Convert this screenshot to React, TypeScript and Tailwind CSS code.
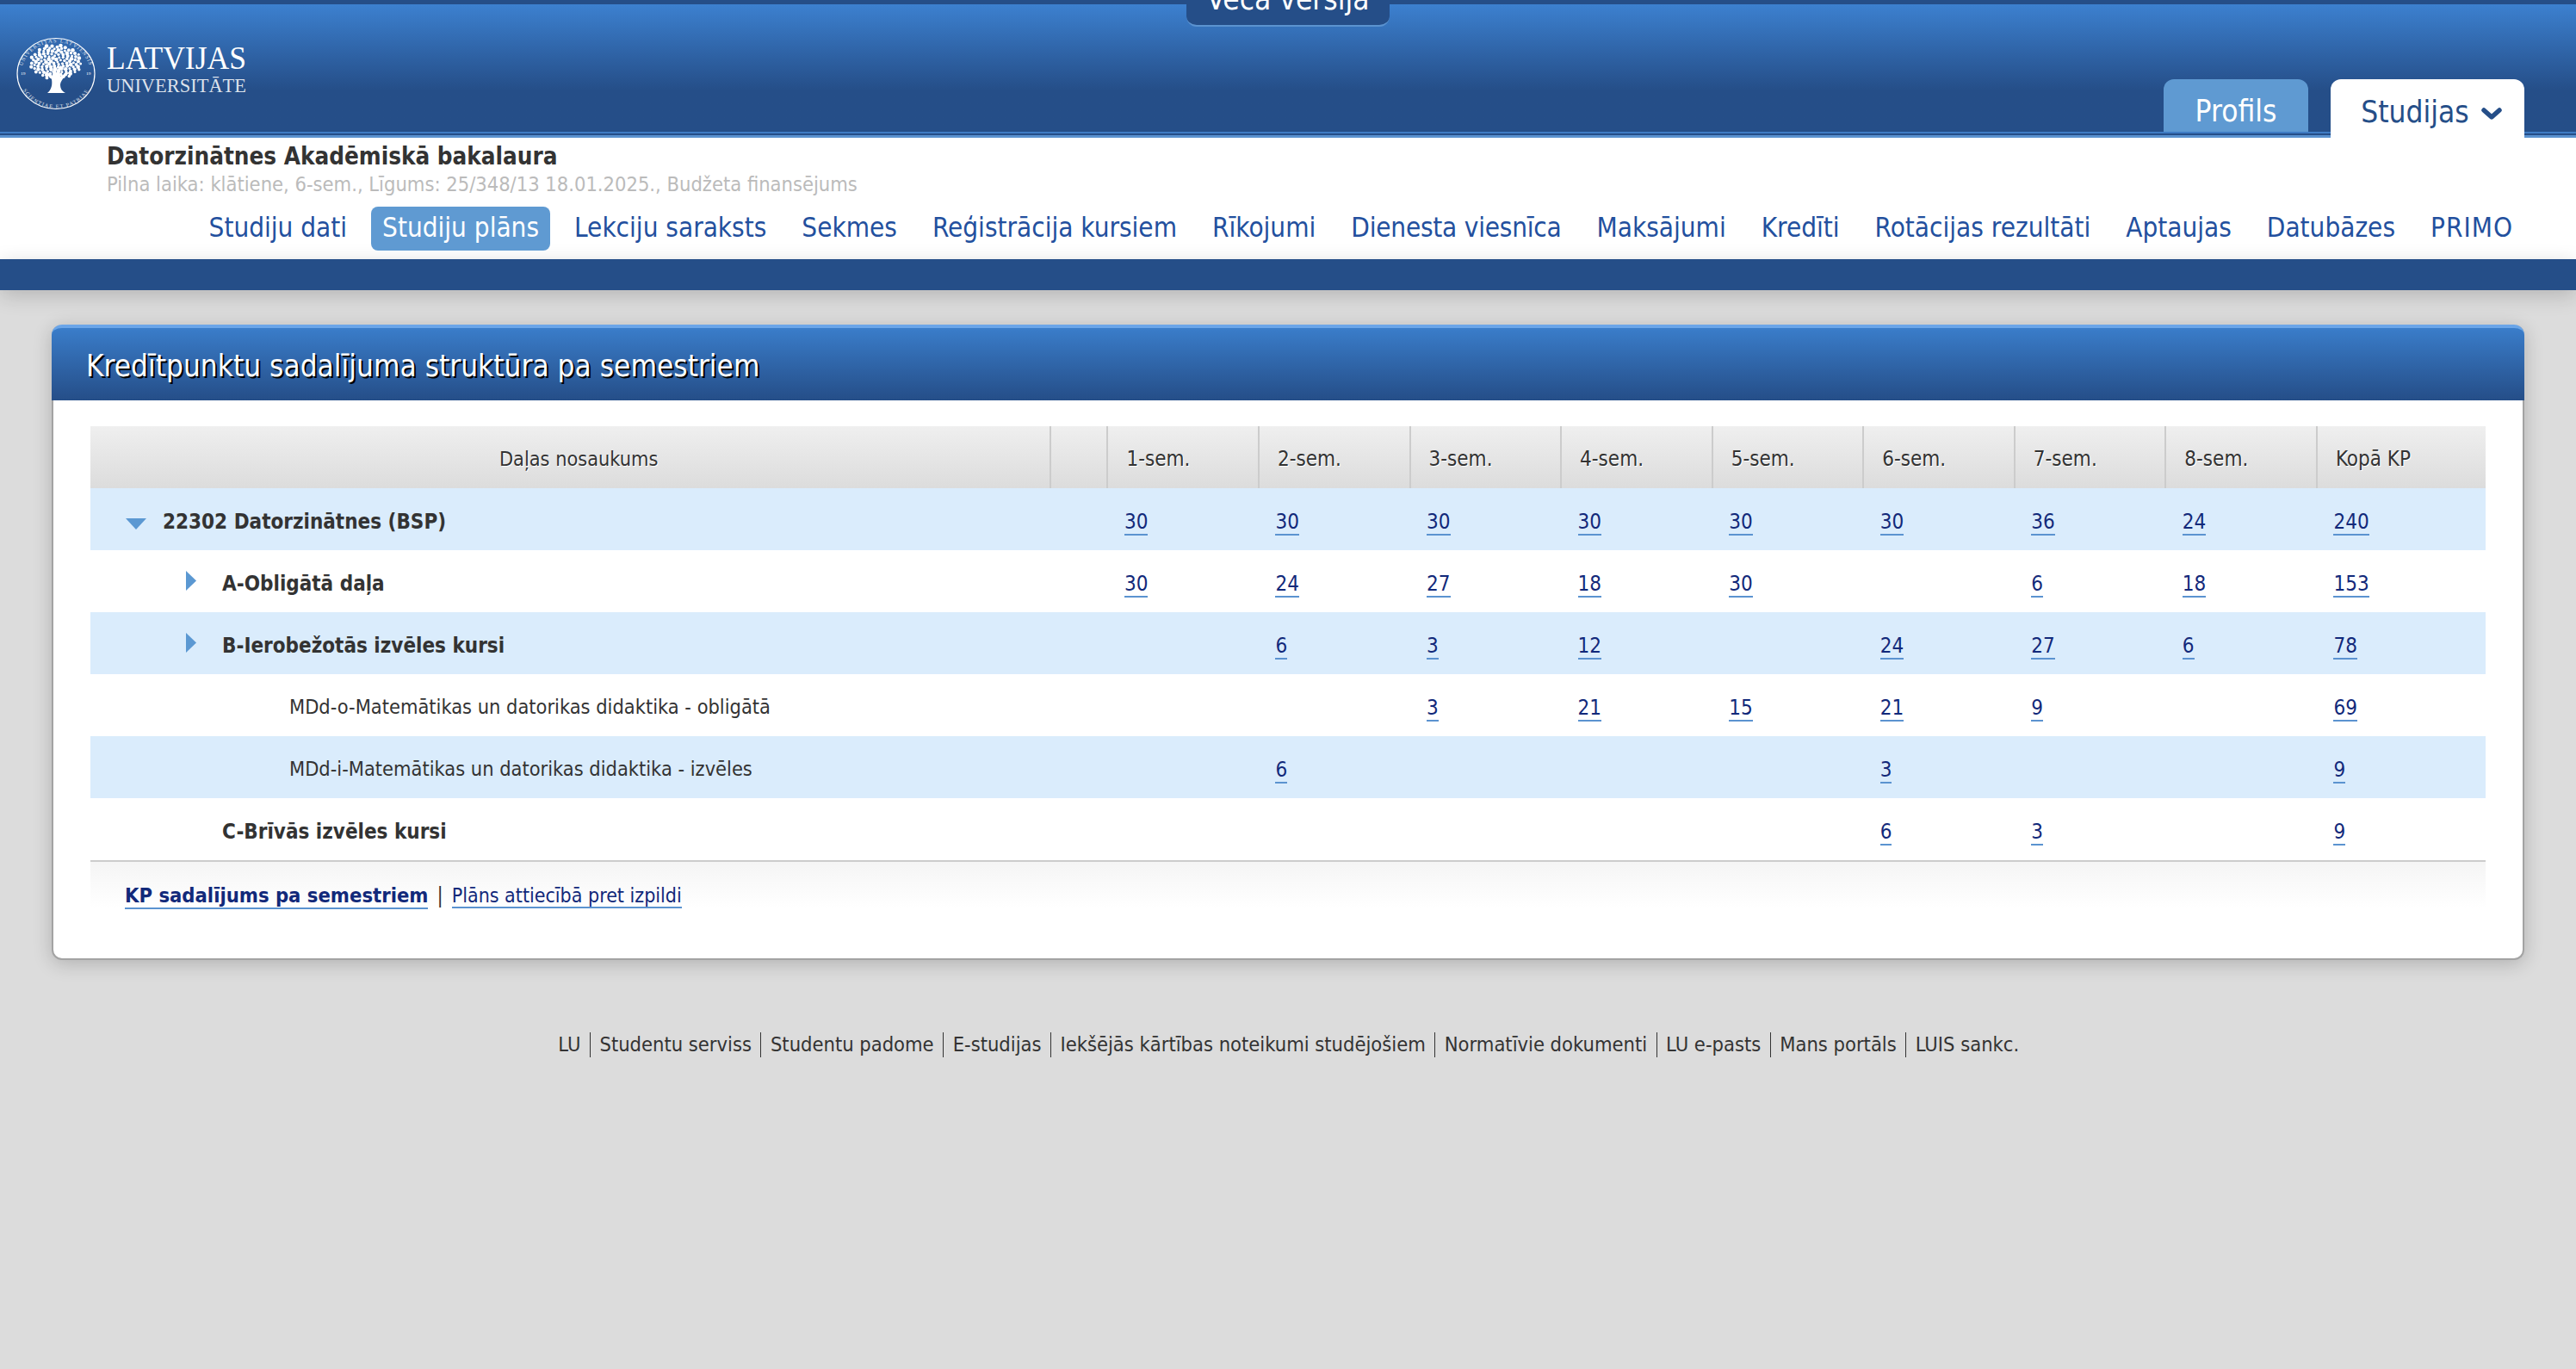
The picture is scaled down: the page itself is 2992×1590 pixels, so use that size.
import React from "react";

const font = "font-['Tahoma','DejaVu_Sans_Condensed','DejaVu_Sans',sans-serif]";

const navItems = [
  { label: "Studiju dati", tweak: "" },
  { label: "Studiju plāns", tweak: "" },
  { label: "Lekciju saraksts", tweak: "" },
  { label: "Sekmes", tweak: "" },
  { label: "Reģistrācija kursiem", tweak: "" },
  { label: "Rīkojumi", tweak: "" },
  { label: "Dienesta viesnīca", tweak: "tracking-[-0.22px]" },
  { label: "Maksājumi", tweak: "" },
  { label: "Kredīti", tweak: "" },
  { label: "Rotācijas rezultāti", tweak: "" },
  { label: "Aptaujas", tweak: "" },
  { label: "Datubāzes", tweak: "" },
  { label: "PRIMO", tweak: "tracking-[1px]" },
];

const footerLinks = [
  "LU",
  "Studentu serviss",
  "Studentu padome",
  "E-studijas",
  "Iekšējās kārtības noteikumi studējošiem",
  "Normatīvie dokumenti",
  "LU e-pasts",
  "Mans portāls",
  "LUIS sankc.",
];

const columns = ["1-sem.", "2-sem.", "3-sem.", "4-sem.", "5-sem.", "6-sem.", "7-sem.", "8-sem.", "Kopā KP"];

type Row = {
  name: string;
  bold: boolean;
  indent: string;
  arrow?: "down" | "right";
  values: string[];
};

const rows: Row[] = [
  { name: "22302 Datorzinātnes (BSP)", bold: true, indent: "pl-[84px]", arrow: "down", values: ["30", "30", "30", "30", "30", "30", "36", "24", "240"] },
  { name: "A-Obligātā daļa", bold: true, indent: "pl-[153px]", arrow: "right", values: ["30", "24", "27", "18", "30", "", "6", "18", "153"] },
  { name: "B-Ierobežotās izvēles kursi", bold: true, indent: "pl-[153px]", arrow: "right", values: ["", "6", "3", "12", "", "24", "27", "6", "78"] },
  { name: "MDd-o-Matemātikas un datorikas didaktika - obligātā", bold: false, indent: "pl-[231px]", values: ["", "", "3", "21", "15", "21", "9", "", "69"] },
  { name: "MDd-i-Matemātikas un datorikas didaktika - izvēles", bold: false, indent: "pl-[231px]", values: ["", "6", "", "", "", "3", "", "", "9"] },
  { name: "C-Brīvās izvēles kursi", bold: true, indent: "pl-[153px]", values: ["", "", "", "", "", "6", "3", "", "9"] },
];

// leaves of the tree in the seal, placed once from a fixed sequence
const leaves: { x: number; y: number; r: number }[] = [];
for (let i = 0; i < 120; i++) {
  const a = i * 2.39996;
  const d = Math.sqrt((i + 0.5) / 120);
  leaves.push({
    x: 65 + Math.cos(a) * d * 30,
    y: 72 + Math.sin(a) * d * 20,
    r: 1.5 + ((i * 7) % 5) * 0.2,
  });
}

const Logo = () => (
  <svg width="300" height="140" viewBox="0 0 300 140" className="block -mt-[5px]">
    <defs>
      <path id="sealTop" d="M 25 85 A 40 40 0 0 1 105 85" />
      <path id="sealBottom" d="M 21 85 A 44 44 0 0 0 109 85" />
    </defs>
    <g transform="translate(0 85.5) scale(1 0.91) translate(0 -85)">
      <circle cx="65" cy="85" r="45" fill="none" stroke="#fff" strokeWidth="1.2" />
      <text fill="#fff" fontSize="6.4" letterSpacing="1.2" fontFamily="Liberation Serif, serif" opacity="0.85">
        <textPath href="#sealTop" startOffset="50%" textAnchor="middle">UNIVERSITAS LATVIENSIS</textPath>
      </text>
      <text fill="#fff" fontSize="6.4" letterSpacing="1.2" fontFamily="Liberation Serif, serif" opacity="0.85">
        <textPath href="#sealBottom" startOffset="50%" textAnchor="middle">SCIENTIAE ET PATRIAE</textPath>
      </text>
      <text x="24" y="87" fill="#fff" fontSize="5.5" fontFamily="Liberation Serif, serif">19</text>
      <text x="100" y="87" fill="#fff" fontSize="5.5" fontFamily="Liberation Serif, serif">19</text>
    </g>
    <g fill="#fff">
      {leaves.map((l, i) => (
        <circle key={i} cx={l.x} cy={l.y} r={l.r} />
      ))}
      <path d="M55 108 C60 104 61 98 60 92 C56 88 51 84 47 82 C53 83 58 85 61 88 L62 76 L65 76 L65 86 L70 76 L72 77 L68 90 C74 86 79 84 84 82 C77 87 71 92 70 98 C70 103 72 106 76 108 Z" />
    </g>
    <text x="124" y="80" fill="#fff" fontSize="38" fontFamily="Liberation Serif, serif" textLength="162" lengthAdjust="spacingAndGlyphs">LATVIJAS</text>
    <text x="124" y="107" fill="#fff" fillOpacity="0.85" fontSize="23.5" fontFamily="Liberation Serif, serif" textLength="162" lengthAdjust="spacingAndGlyphs">UNIVERSITĀTE</text>
  </svg>
);

const DownTriangle = () => (
  <svg width="24" height="13" viewBox="0 0 24 13" className="absolute left-[41px] top-[35px]">
    <path d="M0 0H24L12 13Z" fill="#5b98d2" />
  </svg>
);

const RightTriangle = () => (
  <svg width="12" height="23" viewBox="0 0 12 23" className="absolute left-[111px] top-[24px]">
    <path d="M0 0L12 11.5L0 23Z" fill="#5b98d2" />
  </svg>
);

export default function App() {
  return (
    <div className={`min-h-screen bg-[#dcdcdc] text-[#333] overflow-hidden ${font}`}>
      {/* Header */}
      <header className="relative h-[160px] border-t-[5px] border-[#254e88] bg-gradient-to-b from-[#3c80cf] from-[1px] to-[#254e88] to-[100px]">
        <div className="absolute left-1/2 top-[-5px] h-[31px] w-[236px] -translate-x-1/2 overflow-hidden rounded-b-xl border-b-2 border-[#5b93d0] bg-[#254e88] text-center">
          <span className="block -mt-[21px] text-[35px] leading-[40px] text-white">Vecā versija</span>
        </div>
        <div className="flex h-[148px] items-start justify-between">
          <Logo />
          <div className="mr-[60px] mt-[87px] flex items-stretch gap-[26px]">
            <a className="flex h-[61px] w-[168px] items-center justify-center rounded-t-xl bg-[#5f9ad2] pt-[14px] text-[35px] text-white">Profils</a>
            <a className="relative z-10 flex h-[68px] w-[225px] items-start justify-center gap-[14px] rounded-t-xl bg-white pl-[9px] pt-[14px] text-[35px] leading-[48px] text-[#254e88]">
              Studijas
              <svg width="24" height="15" viewBox="0 0 24 15" className="mt-[19px]">
                <path d="M3 3L12 11L21 3" fill="none" stroke="#254e88" strokeWidth="5.5" strokeLinecap="round" strokeLinejoin="round" />
              </svg>
            </a>
          </div>
        </div>
        <div className="absolute inset-x-0 bottom-0 h-[7px] border-t-2 border-b-[3px] border-t-[#3f7cc4] border-b-[#5b93d0] bg-[#254e88]" />
      </header>

      {/* Study info + menu */}
      <section className="h-[141px] bg-white">
        <div className="pl-[124px] pt-[6px]">
          <div className="text-[27.6px] font-bold leading-[32px] text-[#333]">Datorzinātnes Akadēmiskā bakalaura</div>
          <div className="mt-[3px] text-[23.5px] leading-[26px] text-[#bbb]">Pilna laika: klātiene, 6-sem., Līgums: 25/348/13 18.01.2025., Budžeta finansējums</div>
        </div>
        <nav className="mt-[13px] flex justify-end gap-[15px] pr-[60px]">
          {navItems.map((item) => (
            <a
              key={item.label}
              className={
                item.label === "Studiju plāns"
                  ? "flex h-[51px] items-center whitespace-nowrap rounded-lg bg-[#5f9ad2] px-[13px] pb-[3px] text-[31.2px] text-white"
                  : `flex h-[51px] items-center whitespace-nowrap px-[13px] pb-[3px] text-[31.2px] text-[#23509e] ${item.tweak}`
              }
            >
              {item.label}
            </a>
          ))}
        </nav>
      </section>
      <div className="h-[36px] bg-[#254e88] shadow-[0_6px_24px_rgba(0,0,0,0.18)]" />

      {/* Card */}
      <main className="mx-[60px] mt-[40px] h-[738px] rounded-xl border-x-2 border-b-2 border-[#a3a3a3] bg-white shadow-[0_4px_22px_rgba(0,0,0,0.2)]">
        <div className="-mx-[2px] h-[88px] rounded-t-xl border-t-[4px] border-[#6aa5e8] bg-gradient-to-b from-[#3a7dca] to-[#254e88] pl-[40px] pt-[22px] text-[34.9px] leading-[44px] text-white [text-shadow:2px_2px_0_#000]">
          Kredītpunktu sadalījuma struktūra pa semestriem
        </div>

        <div className="mx-[43px] mt-[30px]">
          <table className="w-full table-fixed border-collapse text-[24px]">
            <colgroup>
              <col className="w-[1115px]" />
              <col className="w-[66px]" />
              {columns.map((c, i) => (
                <col key={c} className={i === 8 ? "w-[196px]" : "w-[175.5px]"} />
              ))}
            </colgroup>
            <thead>
              <tr className="h-[72px] bg-gradient-to-b from-[#efefef] to-[#dcdcdc]">
                <th className="border-r-2 border-[#ccc] pl-[20px] pt-[4px] text-[23.3px] font-normal [text-shadow:1px_1px_0_#fff]">Daļas nosaukums</th>
                <th className="border-r-2 border-[#ccc]" />
                {columns.map((c, i) => (
                  <th
                    key={c}
                    className={`pl-[21px] pt-[4px] text-left font-normal [text-shadow:1px_1px_0_#fff] ${i === 8 ? "" : "border-r-2 border-[#ccc]"}`}
                  >
                    {c}
                  </th>
                ))}
              </tr>
            </thead>
            <tbody>
              {rows.map((row, i) => (
                <tr key={row.name} className={`h-[72px] ${i % 2 === 0 ? "bg-[#daecfc]" : "bg-white"}`}>
                  <td colSpan={2} className={`relative pt-[6px] ${row.indent} ${row.bold ? "font-bold" : "text-[23.4px]"}`}>
                    {row.arrow === "down" && <DownTriangle />}
                    {row.arrow === "right" && <RightTriangle />}
                    {row.name}
                  </td>
                  {row.values.map((v, j) => (
                    <td key={j} className="pl-[19.5px] pt-[6px]">
                      {v && <a className="border-b-2 border-[#5b93d0] text-[#12297a]">{v}</a>}
                    </td>
                  ))}
                </tr>
              ))}
            </tbody>
          </table>
          <div className="h-[56px] border-t-2 border-[#ccc] bg-gradient-to-b from-[#f5f5f5] to-white pl-[40px] pt-[24px] leading-[30px]">
            <a className="border-b-2 border-[#5b93d0] text-[23.6px] font-bold text-[#12297a]">KP sadalījums pa semestriem</a>
            <span className="mx-[10px] text-[24px]">|</span>
            <a className="border-b-2 border-[#5b93d0] text-[23px] text-[#12297a]">Plāns attiecībā pret izpildi</a>
          </div>
        </div>
      </main>

      {/* Footer */}
      <footer className="mt-[84px] flex justify-center pl-[12px] text-[23.5px] leading-[29px] text-[#333]">
        {footerLinks.map((link, i) => (
          <a key={link} className={i === 0 ? "pr-[10.5px]" : "border-l border-[#333] px-[10.5px]"}>
            {link}
          </a>
        ))}
      </footer>
    </div>
  );
}
